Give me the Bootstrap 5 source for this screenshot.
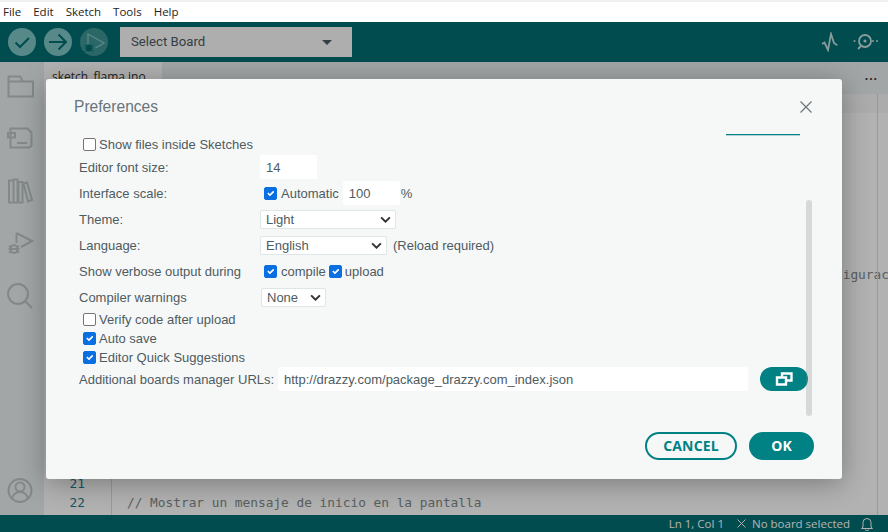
<!DOCTYPE html>
<html lang="en">
<head>
<meta charset="utf-8">
<title>Preferences</title>
<link href="https://cdn.jsdelivr.net/npm/bootstrap@5.3.0/dist/css/bootstrap.min.css" rel="stylesheet">
<style>
html,body{height:100%;overflow:hidden}
body{width:888px;height:532px;position:relative;background:#fff;font-family:"Liberation Sans",Arial,sans-serif;font-size:13px;color:#4e5b61}
.menubar{height:22px;border-top:2px solid #f0f0f0;background:#fff;padding-left:3px;font-family:"Open Sans",sans-serif;font-size:11.5px;color:#222;line-height:20px;gap:12px}
.toolbar{height:40px;background:#006d71;padding-left:8px;gap:8px}
.tbtn{width:28px;height:28px;display:block}
.boardsel{width:232px;height:30px;margin-left:4px;background:#f9f9f9;color:#4e5b61;font-family:"Roboto",sans-serif;font-size:13.2px;padding:0 20px 0 11px}
.caret{width:0;height:0;border-left:5px solid transparent;border-right:5px solid transparent;border-top:5px solid #4e5b61}
.plotter{margin-right:5px}
.monitor{margin-right:9px}
.main{height:453px;min-height:0}
.sidebar{width:44px;background:#e9eeee}
.sidebar svg{display:block;flex:none}
.sidebar svg *{fill:none;stroke:#bcc3c3;stroke-width:2}
.userslot{margin-top:auto}
.editorpane{min-width:0}
.tabbar{height:32px;background:#e9eeee;font-family:"Open Sans",sans-serif;font-size:12px;color:#333}
.tabitem{width:118px;background:#fff;padding:6px 0 0 8px;height:32px}
.more{margin-left:auto;margin-right:10px;letter-spacing:1px;font-weight:700;line-height:28px}
.code{background:#fff;font-family:"DejaVu Sans Mono",monospace;font-size:12.8px;line-height:19px;height:421px;overflow:hidden;position:relative}
.code::before{content:"";position:absolute;left:69px;right:0;top:0;height:19px;background:#f6f6f6}
.code::after{content:"";position:absolute;left:833px;width:1px;top:0;bottom:0;background:#dcdcdc}
.gutter{width:68px;border-right:1px solid #ddd;color:#237893;text-align:right;padding-right:26px;flex:none;height:421px;padding-top:380px}
.lines{white-space:pre;color:#7f8a8a;flex:1;min-width:0;overflow:hidden;position:relative}
.cfgline{height:19px;margin-top:171px;padding-left:723px}
.msgline{height:19px;margin-top:209px;padding-left:15px}
.statusbar{height:17px;background:#006d71;color:#fff;font-family:"Open Sans",sans-serif;font-size:11.5px;padding-right:15px;line-height:17px}
.lncol{margin-right:13px}
.noboard{margin:0 11px 0 6px}
.dimmer{position:absolute;left:0;right:0;top:22px;bottom:0;background:rgba(0,0,0,.3)}
.prefbox{position:absolute;left:46px;top:79px;width:796px;height:400px;background:#f6f8f8;border-radius:3px;box-shadow:0 4px 28px rgba(0,0,0,.32);overflow:hidden}
.prefhead{height:55px;padding:0 28px;color:#6a7479}
.prefhead .ttl{font-size:15.6px}
.closex{display:block;margin-right:2px}
.prefbody{padding-left:33px}
.tealrule{width:74px;height:1px;background:#008184;box-shadow:0 1px 0 rgba(0,129,132,.3);margin-left:647px}
.rowc{height:19px}
.chkrow{padding-left:4px;gap:3px}
.rowf{height:26px}
.lab{width:181px;flex:none;padding-top:1px}
.chks{padding-left:4px;gap:4px}
.chks span{padding-top:1px}
.form-check-input.ckb{width:13px;height:13px;margin:0;border-radius:2px;border:1px solid #767676;flex:none}
.form-check-input.ckb:checked{background-color:#0a6fe0;border-color:#0a6fe0}
.form-control.inp{height:24px;border:0;border-radius:2px;background:#fff;font-size:13px;color:#4e5b61;padding:0 6px;font-family:inherit}
.w57{width:57px}
.chks .pct{margin-left:-3px}
.chks .gap0{margin-left:-1px}
.form-select.sel{height:19px;border:1px solid #dfe6e6;border-radius:2px;background-color:#fff;font-size:13px;color:#4e5b61;font-family:inherit;padding:0 18px 0 5px;line-height:17px;background-image:url("data:image/svg+xml,%3csvg xmlns='http://www.w3.org/2000/svg' viewBox='0 0 12 8'%3e%3cpath fill='none' stroke='%23333' stroke-width='2.200' d='M1 1.500l5 5 5-5'/%3e%3c/svg%3e");background-position:right 4px center;background-size:11px 7px}
.w136{width:136px}.w127{width:127px}.w65{width:65px;margin-left:1px}
.reload{margin-left:6px;padding-top:1px}
.urlrow{height:24px}
.urllab{width:199px;flex:none;padding-top:1px}
.urlinp{width:470px!important}
.teal{background:#008184;color:#fff}
.newin{width:48px;height:24px;margin-left:12px;border-radius:12px;border:0;padding:0}
.sbar{position:absolute;left:760px;top:121px;width:6px;height:216px;background:rgba(130,135,135,.28);border-radius:3px}
.prefoot{position:absolute;right:28px;bottom:19px;gap:12px}
.pill{height:28px;border-radius:14px;font-family:"Open Sans",sans-serif;font-weight:700;font-size:14px;letter-spacing:.15px;padding:0;line-height:24px}
.pill.cancel{width:92px;background:transparent;border:2px solid #008184;color:#008184}
.pill.okb{width:65px;background:#008184;border:2px solid #008184;color:#fff}
</style>
</head>
<body>
<div class="menubar d-flex"><span>File</span><span>Edit</span><span>Sketch</span><span>Tools</span><span>Help</span></div>
<div class="toolbar d-flex align-items-center">
 <svg class="tbtn" viewBox="0 0 28 28"><circle cx="14" cy="14" r="14" fill="#7fc4c4"/><path d="M7.500 14.500l4.500 4.500 9-9" fill="none" stroke="#006d71" stroke-width="2"/></svg>
 <svg class="tbtn" viewBox="0 0 28 28"><circle cx="14" cy="14" r="14" fill="#7fc4c4"/><path d="M5 14h17M14.500 6.500l7.500 7.500-7.500 7.500" fill="none" stroke="#006d71" stroke-width="2"/></svg>
 <svg class="tbtn" viewBox="0 0 28 28"><circle cx="14" cy="14" r="14" fill="#3f9496"/><path d="M8 16V6l16 9-8.500 5" fill="none" stroke="#7fc4c4" stroke-width="1.300"/><ellipse cx="9" cy="20" rx="3" ry="3.500" fill="#006d71"/><path d="M4.500 17l3 1.500M4.500 20h9M4.500 23.500l3-1.500M13.500 17l-3 1.500M13.500 23.500l-3-1.500" stroke="#006d71"/></svg>
 <div class="boardsel d-flex align-items-center justify-content-between"><span>Select Board</span><span class="caret"></span></div>
 <svg class="ms-auto plotter" width="20" height="20" viewBox="0 0 20 20"><path d="M2 12l2.500-1.500L8 18 11 2l3 9 2 1.500 1.500.5" fill="none" stroke="#c5e0e0" stroke-width="1.800"/></svg>
 <svg class="monitor" width="26" height="20" viewBox="0 0 26 20"><circle cx="12" cy="9" r="6" fill="none" stroke="#c5e0e0" stroke-width="1.800"/><circle cx="12" cy="9" r="1.600" fill="#c5e0e0"/><path d="M8 14l-3 3" stroke="#c5e0e0" stroke-width="1.800"/><circle cx="1.500" cy="9" r="1" fill="#c5e0e0"/><circle cx="20" cy="9" r="1" fill="#c5e0e0"/><circle cx="24" cy="9" r="1" fill="#c5e0e0"/></svg>
</div>
<div class="main d-flex">
 <div class="sidebar d-flex flex-column">
  <svg width="44" height="52" viewBox="0 0 44 52"><path d="M8.500 14.500h11.500l3 5h10v15h-24.500zM8.500 19.500h14.500"/></svg>
  <svg width="44" height="52" viewBox="0 0 44 52"><path d="M10.500 14.500h17l4 4v13l-2 2h-19zM8 19h7v4.500H8zM17 29h10"/></svg>
  <svg width="44" height="52" viewBox="0 0 44 52"><path d="M9 14.500h4.500v22H9zM13.500 13.500h4v23h-4zM23.500 17.500l3.500-1 5 17.500-4 1.500zM18.500 16h4v20.500h-4z"/></svg>
  <svg width="44" height="52" viewBox="0 0 44 52"><path d="M16.500 15l15.500 8-11 6M16.500 15v10"/><ellipse cx="14" cy="31" rx="3.500" ry="4"/><path d="M9 28l3 1.500M8.500 31h11M9 34.500l3-1.500M19 28l-3 1.500M19 34.500l-3-1.500" stroke-width="1.300"/></svg>
  <svg width="44" height="52" viewBox="0 0 44 52"><circle cx="18" cy="24" r="10"/><path d="M25 31l7 7"/></svg>
  <svg class="userslot" width="44" height="52" viewBox="0 0 44 52"><circle cx="20" cy="27.500" r="11.500"/><circle cx="20" cy="24" r="4.500"/><path d="M12 36c1-5 4-7 8-7s7 2 8 7"/></svg>
 </div>
 <div class="editorpane flex-grow-1 d-flex flex-column">
  <div class="tabbar d-flex"><div class="tabitem">sketch_flama.ino</div><div class="more">...</div></div>
  <div class="code d-flex">
   <div class="gutter">21<br>22</div>
   <div class="lines"><div class="cfgline">figurac</div><div class="msgline">// Mostrar un mensaje de inicio en la pantalla</div></div>
  </div>
 </div>
</div>
<div class="statusbar d-flex align-items-center justify-content-end"><span class="lncol">Ln 1, Col 1</span><svg width="9" height="9" viewBox="0 0 9 9"><path d="M.5.500l8 8M8.500.500l-8 8" stroke="#fff"/></svg><span class="noboard">No board selected</span><svg width="12" height="14" viewBox="0 0 12 14"><path d="M2 10V5.500a4 4 0 0 1 8 0V10l1.500 1.500h-11zM4.500 12.500a1.500 1.500 0 0 0 3 0" fill="none" stroke="#fff"/></svg></div>
<div class="dimmer"></div>
<div class="prefbox">
 <div class="prefhead d-flex align-items-center justify-content-between"><span class="ttl">Preferences</span><svg class="closex" width="12" height="12" viewBox="0 0 12 12"><path d="M.5.500l11 11M11.500.500l-11 11" stroke="#6a7479" stroke-width="1.200"/></svg></div>
 <div class="prefbody">
  <div class="tealrule"></div>
  <div class="rowc chkrow d-flex align-items-center"><input class="form-check-input ckb" type="checkbox"><span>Show files inside Sketches</span></div>
  <div class="rowf d-flex align-items-center"><span class="lab">Editor font size:</span><input class="form-control inp w57" value="14"></div>
  <div class="rowf d-flex align-items-center"><span class="lab">Interface scale:</span><span class="chks d-flex align-items-center"><input class="form-check-input ckb" type="checkbox" checked><span>Automatic</span><input class="form-control inp w57" value="100"><span class="pct">%</span></span></div>
  <div class="rowf d-flex align-items-center"><span class="lab">Theme:</span><select class="form-select sel w136"><option>Light</option></select></div>
  <div class="rowf d-flex align-items-center"><span class="lab">Language:</span><select class="form-select sel w127"><option>English</option></select><span class="reload">(Reload required)</span></div>
  <div class="rowf d-flex align-items-center"><span class="lab">Show verbose output during</span><span class="chks d-flex align-items-center"><input class="form-check-input ckb" type="checkbox" checked><span>compile</span><input class="form-check-input ckb gap0" type="checkbox" checked><span class="gap0">upload</span></span></div>
  <div class="rowf d-flex align-items-center"><span class="lab">Compiler warnings</span><select class="form-select sel w65"><option>None</option></select></div>
  <div class="rowc chkrow d-flex align-items-center"><input class="form-check-input ckb" type="checkbox"><span>Verify code after upload</span></div>
  <div class="rowc chkrow d-flex align-items-center"><input class="form-check-input ckb" type="checkbox" checked><span>Auto save</span></div>
  <div class="rowc chkrow d-flex align-items-center"><input class="form-check-input ckb" type="checkbox" checked><span>Editor Quick Suggestions</span></div>
  <div class="urlrow d-flex align-items-center"><span class="urllab">Additional boards manager URLs:</span><input class="form-control inp urlinp" value="http://drazzy.com/package_drazzy.com_index.json"><button class="btn teal newin d-flex align-items-center justify-content-center" type="button" aria-label="Open"><svg width="18" height="14" viewBox="0 0 18 14"><path d="M7 5V1.500h9.500v7H12" fill="none" stroke="#fff" stroke-width="2.400"/><path d="M2 5.500h9v7H2z" fill="none" stroke="#fff" stroke-width="2.400"/></svg></button></div>
 </div>
 <div class="sbar"></div>
 <div class="prefoot d-flex"><button class="btn pill cancel" type="button">CANCEL</button><button class="btn pill okb" type="button">OK</button></div>
</div>
</body>
</html>
